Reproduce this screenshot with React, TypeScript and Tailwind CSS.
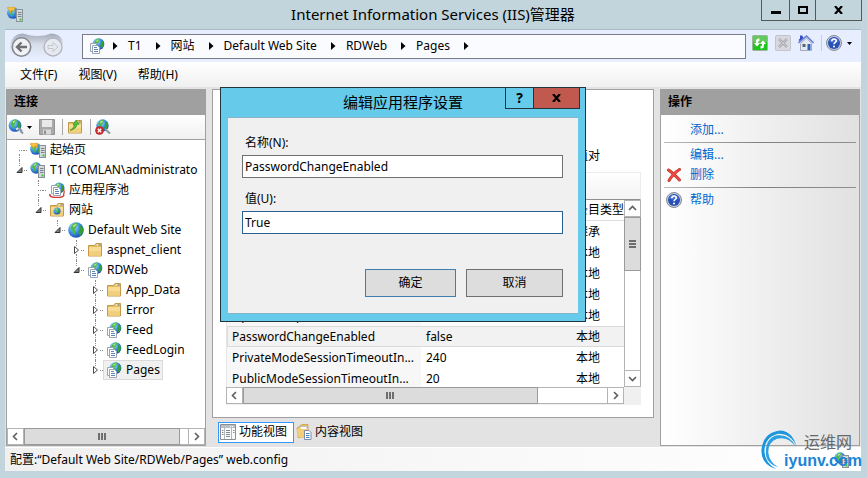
import { type ReactNode } from "react";

/* ---------- icon building blocks ---------- */

function Globe({ x, y, r }: { x: number; y: number; r: number }) {
  return (
    <g transform={`translate(${x - r} ${y - r}) scale(${r / 8})`}>
      <defs>
        <radialGradient id="sea" cx="0.35" cy="0.3" r="0.8">
          <stop offset="0" stopColor="#c4ebff" />
          <stop offset="0.45" stopColor="#3f95ec" />
          <stop offset="1" stopColor="#1240ae" />
        </radialGradient>
      </defs>
      <circle cx="8" cy="8" r="7.8" fill="url(#sea)" />
      <path d="M5 2 Q7 0.500 10 .8 L10 3 L8 4.5 L8.5 6 L6.500 7 L7.5 9.5 L6.5 13 Q4.5 11 4.5 9 L2.500 7 Q2.500 4 5 2Z" fill="#4db845" />
      <path d="M12 3.5 L14 4 Q16 8 14.5 11 L12 14 L10.5 11.5 L10.5 9 L12 7 L11 5.5Z" fill="#35a035" />
      <path d="M5 3.5 Q7 1.5 9 2 L7.5 3.8 L5.5 5.5Z" fill="#b6ec8b" />
    </g>
  );
}

function Server({ x }: { x: number }) {
  return (
    <g transform={`translate(${x} 3)`}>
      <rect x="0.5" y="0.5" width="6" height="12" fill="#d3d8dc" stroke="#8b9399" />
      <path d="M2 3.500h3.500M2 5.500h3.500M2 7.500h3.500" stroke="#7b848a" />
      <rect x="3.5" y="9.5" width="2" height="2" fill="#3fc42b" />
    </g>
  );
}

function Docs({ stroke = "#9aa5b3" }: { stroke?: string }) {
  return (
    <g>
      <path d="M1.5 5.5h6v8h-6z" fill="#fff" stroke={stroke} />
      <path d="M3.5 7.5h5l2 2v6h-7z" fill="#fff" stroke={stroke} />
      <path d="M5 9.5h3M5 11.5h4M5 13.5h4" stroke="#5c84b8" />
    </g>
  );
}

function FolderShape() {
  return (
    <g>
      <path d="M1.5 3.5h6l1.500 -2h5.500v12.500h-13z" fill="#e2bb62" stroke="#c39a48" />
      <path d="M2 5h12v8.500h-12z" fill="#f8dc94" />
      <path d="M2 9h12v4.500h-12z" fill="#f2cf7e" />
      <path d="M9.500 3h2" stroke="#fff" />
      <path d="M11.500 3h2" stroke="#4f95df" />
    </g>
  );
}

function Icon({ children }: { children: ReactNode }) {
  return (
    <svg className="h-4 w-4 shrink-0" viewBox="0 0 16 16" fill="none" aria-hidden="true">
      {children}
    </svg>
  );
}

const StartIcon = () => (
  <Icon>
    <Globe x={6} y={7} r={6} />
    <path d="M0 2 q2-2 4 0 q2-2 4.500 0 l-1.500 1 v3 l-1.500-2 q-2 0-2 3 l-1.500-3.500 z" fill="#ffc23a" stroke="#e59a17" strokeWidth="0.6" />
    <Server x={9} />
  </Icon>
);
const ServerIcon = () => (
  <Icon>
    <Globe x={6} y={6} r={5.8} />
    <Server x={8} />
  </Icon>
);
const PoolIcon = () => (
  <Icon>
    <Globe x={10} y={6} r={5.6} />
    <path d="M1 12 q-1 3 5 3.500 q8 .500 9-2.500" stroke="#d23a32" strokeWidth="1.500" />
    <g transform="translate(1 -2)">
      <Docs />
    </g>
    <path d="M14 6 q2 3 .500 7" stroke="#d23a32" strokeWidth="1.200" />
  </Icon>
);
const SitesIcon = () => (
  <Icon>
    <FolderShape />
    <Globe x={8} y={9} r={3.6} />
  </Icon>
);
const SiteIcon = () => (
  <Icon>
    <Globe x={8} y={8} r={8} />
  </Icon>
);
const FolderIcon = () => (
  <Icon>
    <FolderShape />
  </Icon>
);
const AppIcon = () => (
  <Icon>
    <Globe x={9.5} y={6} r={6} />
    <Docs />
  </Icon>
);
const ConnectIcon = () => (
  <Icon>
    <Globe x={7} y={6.5} r={6.5} />
    <path d="M9 11 l2-1.500 3 2.500 M12 11.500 l3 3" stroke="#8c979f" strokeWidth="2" />
    <path d="M8 10.500 l2-1.500" stroke="#dfe5e9" strokeWidth="2" />
  </Icon>
);
const DisconnectIcon = () => (
  <Icon>
    <Globe x={7.5} y={6.5} r={6.3} />
    <path d="M10 10 l5 4.500" stroke="#8c979f" strokeWidth="2" />
    <circle cx="4.500" cy="11.500" r="4" fill="#d22c2c" stroke="#a81f1f" strokeWidth="0.600" />
    <path d="M2.800 9.800l3.400 3.400M6.200 9.800l-3.400 3.400" stroke="#fff" strokeWidth="1.400" />
  </Icon>
);
const SaveIcon = () => (
  <Icon>
    <path d="M.500 .500h15v15h-15z" fill="#a9a9a9" stroke="#939393" />
    <path d="M3 1h10v7h-10z" fill="#e9e9e9" />
    <path d="M4 10.500h8v5h-8z" fill="#d9d9d9" />
    <path d="M5 11.500h2v3.500h-2z" fill="#8f8f8f" />
  </Icon>
);
const UpFolderIcon = () => (
  <Icon>
    <FolderShape />
    <path d="M3 11.500 q3.500-1.500 4.500-6 l-1.500 .300 3-4.500 3 4 -1.800-.100 q-1 5-7.200 6.300z" fill="#53c235" stroke="#2c8a1a" strokeWidth="0.600" />
  </Icon>
);
const DeleteIcon = () => (
  <Icon>
    <path d="M2.500 3 Q7 6 13.500 13 M13.500 2.500 Q8 5.500 3 13.500" stroke="#b52a22" strokeWidth="3" strokeLinecap="round" />
    <path d="M2.500 3 Q7 6 13.500 13 M13.500 2.500 Q8 5.500 3 13.500" stroke="#ec4a40" strokeWidth="2" strokeLinecap="round" />
  </Icon>
);
const HelpIcon = () => (
  <Icon>
    <circle cx="8" cy="8" r="7.500" fill="#c7ccd6" stroke="#868c98" />
    <circle cx="8" cy="8" r="6" fill="#2750b8" />
    <path d="M2.800 6.500 a5.500 5 0 0 1 10.400 0 q-5 2-10.400 0z" fill="#4a74d4" />
    <path d="M5.800 6.300 q0-2.300 2.200-2.300 t2.200 2 q0 1-1.100 1.600 t-1.100 1.700" stroke="#fff" strokeWidth="1.600" />
    <circle cx="8" cy="11.500" r="1" fill="#fff" />
  </Icon>
);
const RefreshIcon = () => (
  <Icon>
    <rect x="0.500" y="0.500" width="15" height="15" rx="1" fill="#1fc41f" stroke="#9cb59c" />
    <path d="M1 1h14v6q-7 3-14 0z" fill="#62c95c" />
    <path d="M7.500 3.500 q-3.500-.500-3.500 3 v1.500 h-2 l3 3.500 3-3.500 h-2 v-1 q0-1.200 1.500-1z" fill="#fff" />
    <path d="M8.500 13.500 q3.500 .500 3.500-3 v-1.500 h2 l-3-3.500 -3 3.500 h2 v1 q0 1.200-1.500 1z" fill="#fff" />
  </Icon>
);
const StopIcon = () => (
  <Icon>
    <rect x="0.500" y="0.500" width="15" height="15" rx="1" fill="#d7d9de" stroke="#c2c4ca" />
    <path d="M4 4l8 8M12 4l-8 8" stroke="#a9abb0" strokeWidth="2.500" />
    <path d="M4 4l8 8M12 4l-8 8" stroke="#c9cbd0" strokeWidth="1" />
  </Icon>
);
const HomeIcon = () => (
  <Icon>
    <path d="M2 .500h2.500v4h-2.500z" fill="#3b52c4" />
    <path d="M2.500 8.500L8.500 3l5 5.500v7h-11z" fill="#e4e8f0" stroke="#a3abbd" />
    <path d="M.500 8L8.500 1l7 7" stroke="#6b80d8" strokeWidth="1.600" />
    <path d="M1 5.500L5 2" stroke="#2f46bc" strokeWidth="1.600" />
    <path d="M4.500 9h3v3h-3z" fill="#5b6370" />
    <path d="M9.500 9h3v6h-3z" fill="#2d62b8" />
  </Icon>
);
const FeatureIcon = () => (
  <Icon>
    <path d="M.500 .500h15v15h-15z" fill="#fbfbfb" stroke="#8b8f94" />
    <path d="M1 1h14v3h-14z" fill="#b9bfc6" />
    <path d="M10 2.500h1M12 2.500h1" stroke="#fff" />
    <path d="M4.500 4v11M11.500 4v11" stroke="#b4b8bd" />
    <path d="M2 6.500h1.500M2 8.500h1.500M2 10.500h1.500M6 6.500h4M6 8.500h4M6 10.500h4M6 12.500h4M13 6.500h1.500M13 8.500h1.500" stroke="#85898f" />
  </Icon>
);
const ContentIcon = () => (
  <Icon>
    <path d="M1 4l5-3.500h6v12l-10 1z" fill="#e9bf5f" stroke="#c9a04c" strokeWidth="0.800" />
    <path d="M4 2.500h7v9h-8z" fill="#fff" stroke="#b3b9c2" strokeWidth="0.800" />
    <path d="M1 5l4-1.500v10l-3.500-1z" fill="#f3cd78" />
    <path d="M4 5h8v8.500h-8z" fill="#f3cd78" />
    <path d="M8.500 6.500h4.500l2 2v7h-6.500z" fill="#fff" stroke="#7d8ea5" />
    <path d="M10 9.500h3.500M10 11.500h3.500M10 13.500h3.500" stroke="#4d7fc4" />
  </Icon>
);

/* ---------- connection tree ---------- */

type Node = {
  label: string;
  icon: () => ReactNode;
  state: "leaf" | "open" | "closed";
  selected?: boolean;
  children?: Node[];
};

const tree: Node[] = [
  { label: "起始页", icon: StartIcon, state: "leaf" },
  {
    label: "T1 (COMLAN\\administrato",
    icon: ServerIcon,
    state: "open",
    children: [
      { label: "应用程序池", icon: PoolIcon, state: "leaf" },
      {
        label: "网站",
        icon: SitesIcon,
        state: "open",
        children: [
          {
            label: "Default Web Site",
            icon: SiteIcon,
            state: "open",
            children: [
              { label: "aspnet_client", icon: FolderIcon, state: "closed" },
              {
                label: "RDWeb",
                icon: AppIcon,
                state: "open",
                children: [
                  { label: "App_Data", icon: FolderIcon, state: "closed" },
                  { label: "Error", icon: FolderIcon, state: "closed" },
                  { label: "Feed", icon: AppIcon, state: "closed" },
                  { label: "FeedLogin", icon: AppIcon, state: "closed" },
                  { label: "Pages", icon: AppIcon, state: "closed", selected: true },
                ],
              },
            ],
          },
        ],
      },
    ],
  },
];

function Toggle({ state }: { state: Node["state"] }) {
  if (state === "leaf") {
    return (
      <span className="flex h-2 w-[9px] justify-end">
        <span className="mt-1 h-px w-[5px] border-t border-dotted border-[#8c8c8c]" />
      </span>
    );
  }
  return (
    <button type="button" aria-label={state === "open" ? "折叠" : "展开"} className="h-2 w-[9px]">
      <svg className="h-2 w-[9px]" viewBox="0 0 9 8" aria-hidden="true">
        {state === "open" ? (
          <path d="M7 1.500v5h-5z" fill="#808080" stroke="#333" />
        ) : (
          <path d="M2.500 .500v7l4-3.500z" fill="#fff" stroke="#4a4a4a" />
        )}
      </svg>
    </button>
  );
}

function Branch({ nodes, root = false }: { nodes: Node[]; root?: boolean }) {
  return (
    <ul className={root ? "pl-2" : "pl-[19px]"}>
      {nodes.map((node, i) => (
        <li key={node.label}>
          <div className="flex h-5 items-center whitespace-nowrap">
            <span className="flex h-5 w-[9px] shrink-0 flex-col items-center">
              <span className={root && i === 0 ? "flex-1" : "flex-1 border-l border-dotted border-[#8c8c8c]"} />
              <Toggle state={node.state} />
              <span className={i === nodes.length - 1 ? "flex-1" : "flex-1 border-l border-dotted border-[#8c8c8c]"} />
            </span>
            <span className="h-px w-[3px] shrink-0 border-t border-dotted border-[#8c8c8c]" />
            <a
              href="#"
              className={
                node.selected
                  ? "flex h-5 items-center gap-1 border border-[#dadada] bg-[#f0f0f0] px-[2px]"
                  : "flex h-5 items-center gap-1 border border-transparent px-[2px]"
              }
            >
              <node.icon />
              {node.label}
            </a>
          </div>
          {node.children && <Branch nodes={node.children} />}
        </li>
      ))}
    </ul>
  );
}

/* ---------- scroll bars ---------- */

function Chevron({ d }: { d: string }) {
  return (
    <svg className="h-[9px] w-[9px]" viewBox="0 0 9 9" fill="none" aria-hidden="true">
      <path d={d} stroke="#5e5e5e" strokeWidth="1.600" />
    </svg>
  );
}

const arrowBox = "flex h-[17px] w-[17px] shrink-0 items-center justify-center border border-[#b4b4b4] bg-white";

function HScroll({ thumb }: { thumb: string }) {
  return (
    <div className="flex h-[17px] border-y border-[#b4b4b4] bg-white">
      <button type="button" aria-label="向左" className={`${arrowBox} -my-px`}>
        <Chevron d="M6 1L2.500 4.500L6 8" />
      </button>
      <div className="flex min-w-0 flex-1">
        <div className={`${thumb} -my-px flex items-center justify-center gap-px border border-[#9a9a9a] bg-[#dcdcdc]`}>
          <span className="h-[7px] w-[2px] bg-[#6e6e6e]" />
          <span className="h-[7px] w-[2px] bg-[#6e6e6e]" />
          <span className="h-[7px] w-[2px] bg-[#6e6e6e]" />
        </div>
      </div>
      <button type="button" aria-label="向右" className={`${arrowBox} -my-px`}>
        <Chevron d="M3 1L6.500 4.500L3 8" />
      </button>
    </div>
  );
}

function VScroll() {
  return (
    <div className="flex w-[17px] shrink-0 flex-col border-x border-[#b4b4b4] bg-white">
      <button type="button" aria-label="向上" className={`${arrowBox} -mx-px`}>
        <Chevron d="M1 6L4.500 2.500L8 6" />
      </button>
      <div className="flex min-h-0 flex-1 flex-col">
        <div className="-mx-px flex h-[54px] flex-col items-center justify-center gap-px border border-[#9a9a9a] bg-[#dcdcdc]">
          <span className="h-[2px] w-[7px] bg-[#6e6e6e]" />
          <span className="h-[2px] w-[7px] bg-[#6e6e6e]" />
          <span className="h-[2px] w-[7px] bg-[#6e6e6e]" />
        </div>
      </div>
      <button type="button" aria-label="向下" className={`${arrowBox} -mx-px`}>
        <Chevron d="M1 3L4.500 6.500L8 3" />
      </button>
    </div>
  );
}

/* ---------- window parts ---------- */

function TitleBar() {
  return (
    <header className="flex h-[29px] shrink-0 items-start">
      <div className="flex h-7 w-[100px] items-center px-[2px]">
        <StartIcon />
      </div>
      <h1 className="flex-1 text-center text-[15px] leading-[29px]">Internet Information Services (IIS)管理器</h1>
      <div className="-mr-px flex h-[21px] border-x border-b border-[#54585a]">
        <button type="button" aria-label="最小化" className="flex w-[27px] items-center justify-center">
          <span className="mt-1 h-[3px] w-[10px] bg-black" />
        </button>
        <button type="button" aria-label="最大化" className="flex w-[27px] items-center justify-center border-x border-[#54585a]">
          <span className="h-2 w-[10px] border-2 border-black" />
        </button>
        <button type="button" aria-label="关闭" className="flex w-[45px] items-center justify-center">
          <CloseMark />
        </button>
      </div>
    </header>
  );
}

function CloseMark() {
  return (
    <svg className="h-2 w-[9px]" viewBox="0 0 9 8" aria-hidden="true">
      <path d="M1 0l7 8M8 0l-7 8" stroke="#000" strokeWidth="2.200" />
    </svg>
  );
}

const crumbs = ["T1", "网站", "Default Web Site", "RDWeb", "Pages"];

function CrumbArrow() {
  return (
    <svg className="mr-[10px] h-2 w-[5px]" viewBox="0 0 5 8" aria-hidden="true">
      <path d="M0 0v8l4.500-4z" fill="#000" />
    </svg>
  );
}

function AddressBar() {
  return (
    <nav className="flex h-[33px] shrink-0 items-center border-t border-[#a9bcc4] bg-[#e6eeff] pl-1">
      <svg className="h-[29px] w-[60px] shrink-0" viewBox="0 0 60 29" fill="none" role="img" aria-label="后退 前进">
        <defs>
          <linearGradient id="navShade" x1="0" y1="0" x2="0" y2="1">
            <stop offset="0" stopColor="#a4abbb" />
            <stop offset="0.45" stopColor="#d8deea" />
            <stop offset="1" stopColor="#e6eeff" />
          </linearGradient>
        </defs>
        <path d="M1 15 Q2 2 14 1.500 Q22 4 28 4 Q36 4 42 1.500 Q54 2 54 13 Q40 28 14 26 Q1 25 1 15Z" fill="url(#navShade)" />
        <circle cx="12.500" cy="15" r="9.200" fill="#f0f1f4" stroke="#85888f" strokeWidth="1.600" />
        <path d="M18 15h-9M12.500 10.500L8 15l4.500 4.500" stroke="#6d6f75" strokeWidth="2.400" />
        <circle cx="44" cy="15" r="9" fill="#e6e9f0" stroke="#b3b6bf" strokeWidth="1.400" />
        <path d="M39 13.500h5v-3l5 4.500-5 4.500v-3h-5z" stroke="#c3c6cf" />
      </svg>
      <div className="ml-[13px] flex h-[25px] min-w-0 flex-1 items-center border border-[#7b7b83] bg-[#fafbff] pl-[6px]">
        <AppIcon />
        <div className="flex items-center pl-2">
          <CrumbArrow />
          {crumbs.map((crumb) => (
            <span key={crumb} className="flex items-center">
              <a href="#" className="pr-[14px]">
                {crumb}
              </a>
              <CrumbArrow />
            </span>
          ))}
        </div>
      </div>
      <div className="flex w-[115px] items-center gap-[7px] self-start pt-[5px] pl-[6px]">
        <button type="button" aria-label="刷新"><RefreshIcon /></button>
        <button type="button" aria-label="停止"><StopIcon /></button>
        <button type="button" aria-label="主页"><HomeIcon /></button>
        <button type="button" aria-label="帮助" className="flex items-center gap-[5px] border-l border-[#c6ccd8] pl-1">
          <HelpIcon />
          <Caret />
        </button>
      </div>
    </nav>
  );
}

function Caret() {
  return (
    <svg className="h-[3px] w-[5px]" viewBox="0 0 5 3" aria-hidden="true">
      <path d="M0 0h5L2.500 3z" fill="#000" />
    </svg>
  );
}

function MenuBar() {
  return (
    <div className="flex h-[25px] shrink-0 items-center gap-[21px] bg-linear-to-b from-white to-[#f0f0f0] pt-px pl-[15px]">
      <button type="button">文件(F)</button>
      <button type="button">视图(V)</button>
      <button type="button">帮助(H)</button>
    </div>
  );
}

const paneTitle = "h-[26px] shrink-0 bg-[#a0a0a0] px-[7px] font-bold leading-[26px]";

function Connections() {
  return (
    <aside className="flex w-[200px] shrink-0 flex-col border border-t-0 border-[#a0a0a0] bg-white">
      <h2 className={paneTitle}>连接</h2>
      <div className="flex h-[25px] shrink-0 items-center border-b border-[#a0a0a0] bg-linear-to-b from-white to-[#f0f0f0] px-px">
        <button type="button" aria-label="连接" className="flex items-center gap-[3px]">
          <ConnectIcon />
          <Caret />
        </button>
        <button type="button" aria-label="保存" className="ml-[7px]"><SaveIcon /></button>
        <span className="mr-1 ml-[7px] h-4 w-px bg-[#a8a8a8]" />
        <button type="button" aria-label="向上"><UpFolderIcon /></button>
        <span className="mr-1 ml-[7px] h-4 w-px bg-[#a8a8a8]" />
        <button type="button" aria-label="断开连接"><DisconnectIcon /></button>
      </div>
      <div className="min-h-0 flex-1 overflow-hidden">
        <Branch nodes={tree} root />
      </div>
      <HScroll thumb="w-[95%]" />
    </aside>
  );
}

const settings = [
  { name: "DefaultCentralPublishing", value: "", type: "继承" },
  { name: "DefaultTSGateway", value: "", type: "本地" },
  { name: "GatewayCredentialsSource", value: "4", type: "本地" },
  { name: "LocalHelp", value: "false", type: "本地" },
  { name: "OptimizeExperience", value: "false", type: "本地" },
  { name: "PasswordChangeEnabled", value: "false", type: "本地", selected: true },
  { name: "PrivateModeSessionTimeoutIn...", value: "240", type: "本地" },
  { name: "PublicModeSessionTimeoutIn...", value: "20", type: "本地" },
];

function Settings() {
  return (
    <main className="flex min-w-0 flex-1 flex-col">
      <section className="flex min-h-0 flex-1 flex-col border border-[#a0a0a0] bg-white pr-3 pb-3 pl-[13px]">
        <h2 className="px-3 pt-3 text-xl">应用程序设置</h2>
        <p className="mt-auto truncate px-[14px] pb-2 leading-4">使用此功能可以存储供托管代码应用程序在运行时使用的名称和值对</p>
        <div className="h-[28px] shrink-0 border border-b-[#8f8f8f] border-[#ececec] bg-linear-to-b from-white to-[#f3f3f3]" />
        <div className="flex h-[187px] shrink-0">
          <div className="min-w-0 flex-1 overflow-hidden border-l border-[#e6e6e6]">
            <table className="w-full table-fixed border-separate border-spacing-0 text-left">
              <thead>
                <tr className="h-[21px]">
                  <th className="w-[194px] border-b border-[#dedede] px-[5px] font-normal">名称</th>
                  <th className="w-[150px] border-b border-[#dedede] px-[5px] font-normal">值</th>
                  <th className="border-b border-[#dedede] pl-[5px] font-normal whitespace-nowrap">条目类型</th>
                </tr>
              </thead>
              <tbody>
                {settings.map((s) => (
                  <tr key={s.name} className={s.selected ? "h-[21px] bg-[#f2f2f2]" : "h-[21px]"}>
                    <td className={s.selected ? "border-y border-l border-[#dadada] px-[4px]" : "bg-[#f7f7f7] px-[5px] whitespace-nowrap"}>{s.name}</td>
                    <td className={s.selected ? "border-y border-[#dadada] px-[5px]" : "px-[5px]"}>{s.value}</td>
                    <td className={s.selected ? "border-y border-[#dadada] px-[5px]" : "px-[5px]"}>{s.type}</td>
                  </tr>
                ))}
              </tbody>
            </table>
          </div>
          <VScroll />
        </div>
        <div className="h-[18px] shrink-0 bg-[#f0f0f0] pr-[17px]">
          <HScroll thumb="w-[81%]" />
        </div>
      </section>
      <div className="flex h-[28px] shrink-0 items-center px-[6px]">
        <button type="button" className="flex h-[21px] items-center gap-[3px] border border-[#3399ff] bg-white pr-[6px] pl-px">
          <FeatureIcon />
          功能视图
        </button>
        <button type="button" className="flex h-[21px] items-center gap-[3px] px-[2px]">
          <ContentIcon />
          内容视图
        </button>
      </div>
    </main>
  );
}

const actionLink = "flex h-5 items-center gap-2 pl-[2px] text-[#0066cc]";
const divider = "h-px border-0 bg-linear-to-r from-[#bdbdbd] via-[#808080] to-[#909090]";

function Actions() {
  return (
    <aside className="flex w-[200px] shrink-0 flex-col border border-t-0 border-[#a0a0a0] bg-linear-to-r from-white to-[#e1e1e1]">
      <h2 className={paneTitle}>操作</h2>
      <div className="flex flex-col px-[3px] pt-[5px]">
        <a href="#" className={actionLink}><span className="w-4" />添加...</a>
        <hr className={`${divider} my-[2px]`} />
        <a href="#" className={actionLink}><span className="w-4" />编辑...</a>
        <a href="#" className={actionLink}><DeleteIcon />删除</a>
        <hr className={`${divider} my-[2px]`} />
        <a href="#" className={actionLink}><HelpIcon />帮助</a>
      </div>
    </aside>
  );
}

const field = "h-[23px] w-full border bg-white px-[2px] outline-none";
const dialogButton = "h-[28px] border bg-[#dddddd]";

function EditDialog() {
  return (
    <form
      role="dialog"
      aria-labelledby="edit-title"
      className="absolute top-[87px] left-[220px] flex w-[366px] flex-col border border-[#24343c] bg-[#66caea] px-[7px] pb-[7px]"
    >
      <div className="flex h-[29px] items-start">
        <span className="w-[73px]" />
        <h2 id="edit-title" className="flex-1 text-center text-[15px] leading-[29px]">编辑应用程序设置</h2>
        <div className="-mr-[2px] flex h-[21px] border-x border-b border-[#24343c]">
          <button type="button" aria-label="帮助" className="w-[28px] border-r border-[#24343c] text-sm leading-5 font-bold">?</button>
          <button type="button" aria-label="关闭" className="flex w-[45px] items-center justify-center bg-[#c1594f]">
            <CloseMark />
          </button>
        </div>
      </div>
      <div className="flex flex-col border-y border-[#86b4c6] bg-[#f0f0f0] pt-4 pr-[15px] pb-4 pl-[14px]">
        <label htmlFor="setting-name" className="px-[3px] pb-[3px] leading-[18px]">名称(N):</label>
        <input id="setting-name" defaultValue="PasswordChangeEnabled" className={`${field} border-[#707070]`} />
        <label htmlFor="setting-value" className="px-[3px] pt-3 pb-[3px] leading-[18px]">值(U):</label>
        <input id="setting-value" defaultValue="True" className={`${field} border-[#2a5f92]`} />
        <div className="flex justify-end gap-[10px] pt-[35px]">
          <button type="submit" className={`${dialogButton} w-[91px] border-[#3f7fb0]`}>确定</button>
          <button type="button" className={`${dialogButton} w-[97px] border-[#707070]`}>取消</button>
        </div>
      </div>
    </form>
  );
}

function Watermark() {
  return (
    <div className="absolute right-[5px] bottom-2 flex h-[40px] items-end">
      <svg className="-mr-[14px] h-[40px] w-[37px]" viewBox="0 0 37 41" aria-hidden="true">
        <path d="M36 17 Q30 3 16 4 Q3 8 3 22 Q4 34 15 40 Q-1 35 0 20 Q2 2 20 .500 Q32 2 36 17Z" fill="#1b95dc" />
        <path d="M35 17 Q27 6 16 9 Q7 12 7 23 Q8 33 17 38 Q4 34 4.500 22 Q5 8 16 5.500 Q29 4 35 17Z" fill="#2a9fe2" />
      </svg>
      <div className="flex flex-col items-end">
        <span className="pr-[10px] text-[16px] leading-[20px] text-[#66686c]">运维网</span>
        <span className="font-['Liberation_Sans',sans-serif] text-[16px] leading-[18px] font-bold text-[#1c84d4]">iyunv.com</span>
      </div>
    </div>
  );
}

export default function App() {
  return (
    <div className="relative flex h-screen flex-col overflow-hidden bg-[#c3d5dc] pr-[6px] pb-[7px] pl-[5px] font-['Noto_Sans','Noto_Sans_CJK_SC',sans-serif] text-[12px] text-black">
      <TitleBar />
      <AddressBar />
      <MenuBar />
      <div className="flex min-h-0 flex-1 gap-[6px] bg-[#e3e3e3] px-px pt-[2px] pb-px">
        <Connections />
        <Settings />
        <Actions />
      </div>
      <footer className="flex h-[24px] shrink-0 items-center justify-between border-t border-white bg-linear-to-r from-[#f0f0f0] to-white pr-[11px] pl-[5px]">
        <span>配置:“Default Web Site/RDWeb/Pages” web.config</span>
        <ServerIcon />
      </footer>
      <Watermark />
      <EditDialog />
    </div>
  );
}
